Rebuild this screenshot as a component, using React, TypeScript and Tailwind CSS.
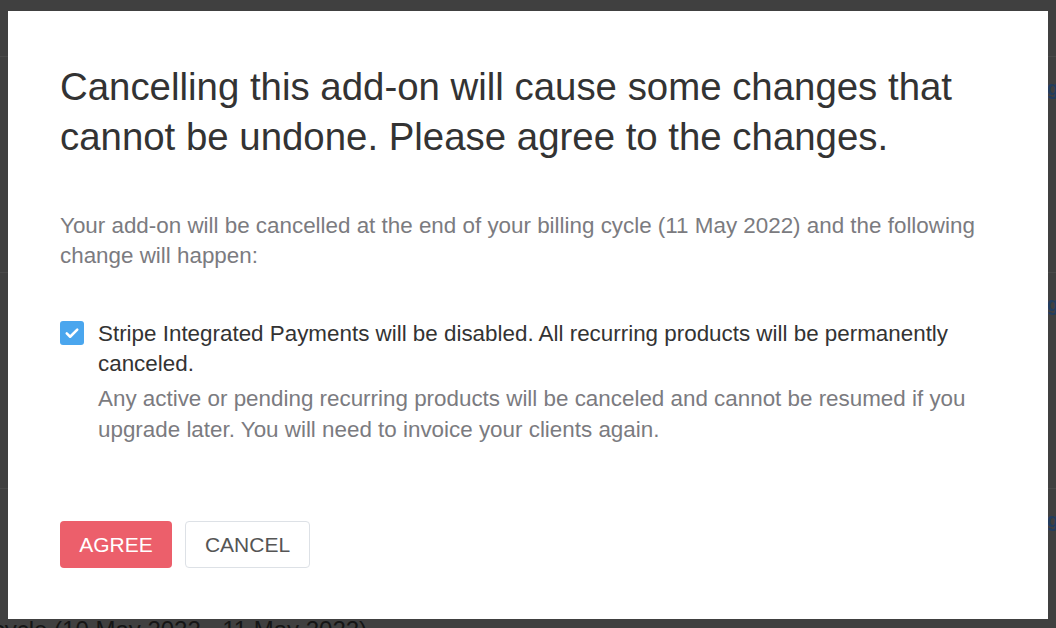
import React from "react";

const sections = [
  { title: "Stat", note: "Il" },
  { title: "Aut", note: "Il" },
];

function CheckIcon() {
  return (
    <svg viewBox="0 0 24 24" className="w-[18px] h-[18px]" fill="none">
      <path d="M5 12.5l4.5 4.5L19 7.5" stroke="white" strokeWidth="3.4" strokeLinecap="round" strokeLinejoin="round" />
    </svg>
  );
}

function PageRow({ note }: { note: string }) {
  return (
    <div className="flex items-start justify-between pt-[16px]">
      <span className="mt-[12px] text-[20px] text-[#151515] ml-[60px]">{note}</span>
      <span className="text-[20px] font-bold text-[#233d5e]">Manage</span>
    </div>
  );
}

export default function App() {
  return (
    <div
      className="relative w-[1056px] h-[628px] overflow-hidden bg-[#404040]"
      style={{ fontFamily: '"Liberation Sans", Arial, Helvetica, sans-serif' }}
    >
      {/* page behind the dimmed overlay */}
      <div className="flex flex-col -ml-[70px] w-[1140px]">
        {sections.map((s, i) => (
          <div key={i} className="flex flex-col h-[216px]">
            <div className="h-[57px] flex items-start pt-[9px] border-b border-[#4a4a4a]">
              <span className="text-[25px] font-bold text-[#151515]">{s.title}</span>
            </div>
            <PageRow note={s.note} />
          </div>
        ))}
        <div className="flex flex-col">
          <div className="h-[57px] flex items-start pt-[9px] border-b border-[#4a4a4a]">
            <span className="text-[25px] font-bold text-[#151515]">Bilin</span>
          </div>
          <div className="h-[52px]">
            <PageRow note="Il" />
          </div>
          <div className="mt-[71px] -ml-[8px] text-[24px] leading-[36px] text-[#151515]">Billing cycle (10 May 2022 - 11 May 2022)</div>
        </div>
      </div>

      {/* modal */}
      <div className="absolute left-[8px] top-[11px] w-[1040px] h-[608px] bg-white pl-[52px] pr-[40px] pt-[51px] flex flex-col">
        <h1 className="text-[38.4px] leading-[50px] text-[#333333] font-normal">
          Cancelling this add-on will cause some changes that cannot be undone. Please agree to the changes.
        </h1>
        <p className="mt-[49px] text-[22.4px] leading-[30px] text-[#7b7b80]">
          Your add-on will be cancelled at the end of your billing cycle (11 May 2022) and the following change will happen:
        </p>
        <div className="mt-[48px] flex items-start gap-[14px]">
          <div className="mt-[2px] w-[24px] h-[24px] shrink-0 rounded-[3px] bg-[#4aa6ee] flex items-center justify-center">
            <CheckIcon />
          </div>
          <div className="flex flex-col pr-[10px]">
            <span className="text-[22.4px] leading-[30px] text-[#333333]">
              Stripe Integrated Payments will be disabled. All recurring products will be permanently canceled.
            </span>
            <span className="mt-[4px] text-[22.4px] leading-[31px] text-[#7b7b80]">
              Any active or pending recurring products will be canceled and cannot be resumed if you upgrade later. You will need to invoice your clients again.
            </span>
          </div>
        </div>
        <div className="mt-[76px] flex gap-[13px]">
          <button className="w-[112px] h-[47px] rounded-[4px] bg-[#ec5f6b] text-white text-[21px]">AGREE</button>
          <button className="w-[125px] h-[47px] rounded-[4px] bg-white border border-[#dde1e6] text-[#555555] text-[21px]">CANCEL</button>
        </div>
      </div>
    </div>
  );
}
